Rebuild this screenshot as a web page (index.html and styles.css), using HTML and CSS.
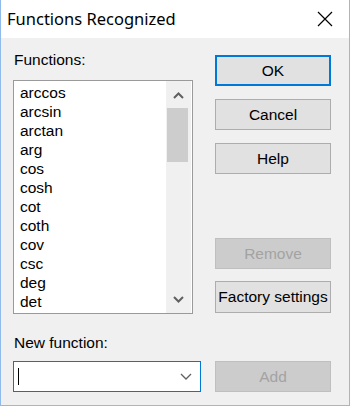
FILE: index.html
```html
<!DOCTYPE html>
<html lang="en">
<head>
    <meta charset="UTF-8">
    <title>Functions Recognized</title>
    <link rel="stylesheet" href="styles.css">
</head>
<body>
    <div class="dialog">
        <div class="titlebar">
            <span class="title">Functions Recognized</span>
            <svg class="close" width="16" height="16" viewBox="0 0 16 16">
                <path d="M1 1 L15 15 M15 1 L1 15" stroke="#000" stroke-width="1.2" fill="none"/>
            </svg>
        </div>

        <div class="body">
            <div class="left">
                <div class="label">Functions:</div>
                <div class="listbox">
                    <ul class="items">
                        <li>arccos</li>
                        <li>arcsin</li>
                        <li>arctan</li>
                        <li>arg</li>
                        <li>cos</li>
                        <li>cosh</li>
                        <li>cot</li>
                        <li>coth</li>
                        <li>cov</li>
                        <li>csc</li>
                        <li>deg</li>
                        <li>det</li>
                    </ul>
                    <div class="scrollbar">
                        <svg class="arrow" width="11" height="7" viewBox="0 0 11 7">
                            <path d="M1 6 L5.5 1.5 L10 6" stroke="#606060" stroke-width="2" fill="none"/>
                        </svg>
                        <div class="track">
                            <div class="thumb"></div>
                        </div>
                        <svg class="arrow" width="11" height="7" viewBox="0 0 11 7">
                            <path d="M1 1 L5.5 5.5 L10 1" stroke="#606060" stroke-width="2" fill="none"/>
                        </svg>
                    </div>
                </div>

                <div class="label label-new">New function:</div>
                <div class="combo">
                    <span class="caret"></span>
                    <svg class="combo-arrow" width="12" height="7" viewBox="0 0 12 7">
                        <path d="M1 1 L6 6 L11 1" stroke="#606060" stroke-width="1.3" fill="none"/>
                    </svg>
                </div>
            </div>

            <div class="right">
                <button class="btn btn-default">OK</button>
                <button class="btn">Cancel</button>
                <button class="btn">Help</button>
                <button class="btn btn-remove" disabled>Remove</button>
                <button class="btn btn-factory">Factory settings</button>
                <button class="btn btn-add" disabled>Add</button>
            </div>
        </div>
    </div>
</body>
</html>
```

FILE: styles.css
```css
* {
    margin: 0;
    padding: 0;
    box-sizing: border-box;
}

body {
    font-family: 'Liberation Sans', Arial, sans-serif;
    font-size: 15.5px;
    color: #000000;
    background: #f0f0f0;
}

.dialog {
    width: 350px;
    height: 406px;
    border: 1px solid #8fbbea;
    border-top: none;
    background: #f0f0f0;
}

.titlebar {
    height: 38px;
    background: #ffffff;
    display: flex;
    align-items: center;
    justify-content: space-between;
    padding: 0 16px 0 6px;
}

.title {
    font-family: 'Noto Sans', sans-serif;
    font-size: 16.5px;
    padding-bottom: 1px;
}

.close {
    display: block;
    margin-top: -1px;
}

.body {
    display: flex;
    gap: 14px;
    padding-left: 12px;
}

.left {
    width: 188px;
    padding-top: 13px;
}

.label {
    line-height: 18px;
    height: 18px;
    padding-left: 1px;
}

.listbox {
    margin-top: 11px;
    width: 180px;
    height: 234px;
    border: 1px solid #9a9a9a;
    background: #ffffff;
    display: flex;
    overflow: hidden;
}

.items {
    list-style: none;
    flex: 1;
    padding: 2px 0 0 6px;
}

.items li {
    height: 19px;
    line-height: 19px;
}

.scrollbar {
    width: 25px;
    margin-right: 1px;
    background: #f0f0f0;
    display: flex;
    flex-direction: column;
    align-items: center;
}

.arrow {
    display: block;
    margin: 11px 0 8px;
}

.scrollbar .arrow:last-child {
    margin: 8px 0 10px;
}

.track {
    flex: 1;
    width: 100%;
    padding-top: 1px;
}

.thumb {
    width: 21px;
    height: 54px;
    margin-left: 1px;
    background: #cdcdcd;
}

.label-new {
    margin-top: 20px;
}

.combo {
    margin-top: 9px;
    height: 31px;
    border: 1px solid #0078d7;
    background: #ffffff;
    display: flex;
    align-items: center;
    justify-content: space-between;
    padding: 0 8px 0 4px;
}

.caret {
    width: 1px;
    height: 17px;
    background: #000000;
}

.combo-arrow {
    display: block;
}

.right {
    width: 116px;
    padding-top: 17px;
    display: flex;
    flex-direction: column;
}

.btn {
    height: 31px;
    width: 116px;
    background: #e1e1e1;
    border: 1px solid #adadad;
    font-family: inherit;
    font-size: 15.5px;
    color: #000000;
    margin-bottom: 13px;
}

.btn-default {
    border: 2px solid #0078d7;
}

.btn:disabled {
    background: #cccccc;
    border-color: #bfbfbf;
    color: #a3a3a3;
}

.btn-remove {
    margin-top: 51px;
    margin-bottom: 12px;
}

.btn-factory {
    height: 32px;
    margin-bottom: 48px;
}
```
